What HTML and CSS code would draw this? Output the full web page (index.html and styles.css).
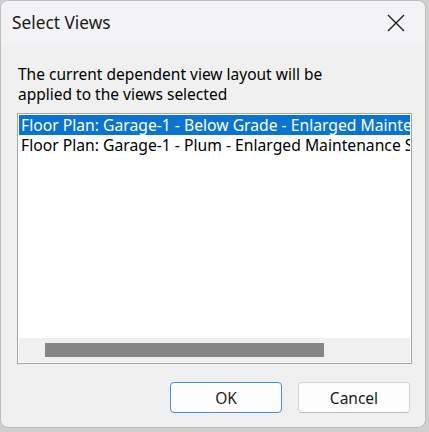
FILE: index.html
```html
<!DOCTYPE html>
<html>
<head>
<meta charset="utf-8">
<link rel="stylesheet" href="styles.css">
</head>
<body>
<div class="dialog">
  <div class="titlebar">
    <span class="title">Select Views</span>
    <svg class="close" width="18" height="18" viewBox="0 0 18 18"><path d="M1 1 L17 17 M17 1 L1 17" stroke="#1a1a1a" stroke-width="1.3" fill="none"/></svg>
  </div>
  <div class="body">
    <p class="label">The current dependent view layout will be<br>applied to the views selected</p>
    <div class="listbox">
      <div class="items">
        <div class="item selected">Floor Plan: Garage-1 - Below Grade - Enlarged Maintenance Shop</div>
        <div class="item">Floor Plan: Garage-1 - Plum - Enlarged Maintenance Shop</div>
      </div>
      <div class="hscroll"><div class="thumb"></div></div>
    </div>
    <div class="buttons">
      <button class="btn default">OK</button>
      <button class="btn">Cancel</button>
    </div>
  </div>
</div>
</body>
</html>
```
FILE: styles.css
```css
html, body {
  margin: 0;
  padding: 0;
  background: #cfcfcf;
  width: 429px;
  height: 432px;
  overflow: hidden;
}
.dialog {
  width: 426px;
  height: 428px;
  background: #f0f0f0;
  border-radius: 8px;
  border: 1px solid #bdbdbd;
  box-sizing: border-box;
  overflow: hidden;
  display: flex;
  flex-direction: column;
  font-family: "Noto Sans", "Open Sans", sans-serif;
  color: #000;
}
.titlebar {
  height: 43px;
  background: #f3f3f6;
  display: flex;
  align-items: center;
  justify-content: space-between;
  padding: 0 20px 0 11px;
  flex: none;
}
.title {
  font-size: 17.3px;
  color: #1a1a1a;
}
.close { display: block; }
.body {
  flex: 1;
  display: flex;
  flex-direction: column;
  padding: 20px 15px 0 16px;
}
.label {
  margin: 0 0 9px 1px;
  font-size: 15.5px;
  line-height: 20px;
}
.listbox {
  height: 251px;
  box-sizing: border-box;
  border: 1px solid #a6a6a6;
  background: #fff;
  display: flex;
  flex-direction: column;
  padding: 1px;
  width: 395px;
}
.items {
  flex: 1;
  overflow: hidden;
  white-space: nowrap;
}
.item {
  font-size: 15.7px;
  height: 20px;
  line-height: 20px;
  padding-left: 2px;
}
.item.selected {
  background: #0a74d0;
  color: #fff;
}
.hscroll {
  height: 24px;
  background: #f0f0f0;
  display: flex;
  align-items: center;
  padding-left: 26px;
}
.thumb {
  width: 279px;
  height: 14px;
  background: #858585;
}
.buttons {
  display: flex;
  justify-content: flex-end;
  gap: 16px;
  margin-top: 18px;
  width: 393px;
}
.btn {
  width: 112px;
  height: 31px;
  font-family: "Noto Sans", "Open Sans", sans-serif;
  font-size: 15.5px;
  background: #fdfdfd;
  border: 1px solid #d4d4d4;
  border-bottom-color: #bcbcbc;
  border-radius: 4px;
  color: #1a1a1a;
  padding: 0;
}
.btn.default {
  border: 1px solid #4f8dca;
}
```
